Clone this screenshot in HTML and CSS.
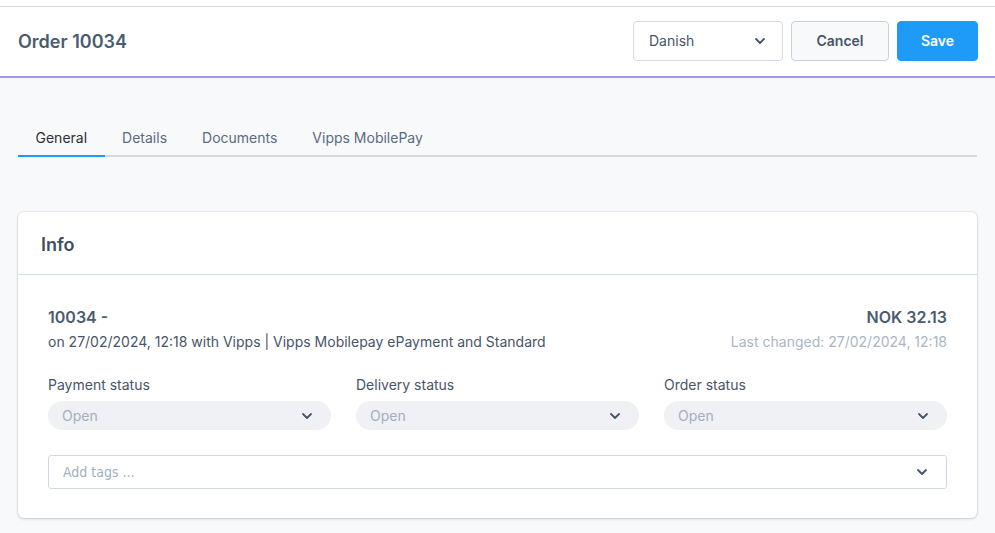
FILE: index.html
```html
<!DOCTYPE html>
<html>
<head>
<meta charset="utf-8">
<link rel="stylesheet" href="styles.css">
</head>
<body>
<div class="topstrip"></div>
<header class="header">
  <h1 class="title">Order 10034</h1>
  <div class="actions">
    <div class="lang">
      <span>Danish</span>
      <svg class="chev" width="12" height="8" viewBox="0 0 12 8"><path d="M2 2l4 4 4-4" fill="none" stroke="#475569" stroke-width="1.8" stroke-linecap="round" stroke-linejoin="round"/></svg>
    </div>
    <button class="btn cancel">Cancel</button>
    <button class="btn save">Save</button>
  </div>
</header>
<main class="main">
  <nav class="tabs">
    <span class="tab active">General</span>
    <span class="tab">Details</span>
    <span class="tab">Documents</span>
    <span class="tab">Vipps MobilePay</span>
  </nav>
  <section class="card">
    <div class="card-head">Info</div>
    <div class="card-body">
      <div class="summary">
        <div>
          <div class="ordno">10034 -</div>
          <div class="sub">on 27/02/2024, 12:18 with Vipps | Vipps Mobilepay ePayment and Standard</div>
        </div>
        <div class="right">
          <div class="amount">NOK 32.13</div>
          <div class="changed">Last changed: 27/02/2024, 12:18</div>
        </div>
      </div>
      <div class="statuses">
        <div class="field">
          <label>Payment status</label>
          <div class="pill"><span>Open</span><svg width="12" height="8" viewBox="0 0 12 8"><path d="M2 2l4 4 4-4" fill="none" stroke="#475569" stroke-width="1.8" stroke-linecap="round" stroke-linejoin="round"/></svg></div>
        </div>
        <div class="field">
          <label>Delivery status</label>
          <div class="pill"><span>Open</span><svg width="12" height="8" viewBox="0 0 12 8"><path d="M2 2l4 4 4-4" fill="none" stroke="#475569" stroke-width="1.8" stroke-linecap="round" stroke-linejoin="round"/></svg></div>
        </div>
        <div class="field">
          <label>Order status</label>
          <div class="pill"><span>Open</span><svg width="12" height="8" viewBox="0 0 12 8"><path d="M2 2l4 4 4-4" fill="none" stroke="#475569" stroke-width="1.8" stroke-linecap="round" stroke-linejoin="round"/></svg></div>
        </div>
      </div>
      <div class="tags">
        <span>Add tags ...</span>
        <svg width="12" height="8" viewBox="0 0 12 8"><path d="M2 2l4 4 4-4" fill="none" stroke="#475569" stroke-width="1.8" stroke-linecap="round" stroke-linejoin="round"/></svg>
      </div>
    </div>
  </section>
</main>
</body>
</html>
```

FILE: styles.css
```css
* { box-sizing: border-box; }
html, body { margin: 0; padding: 0; }
body {
  font-family: Inter, "Noto Sans", sans-serif;
  background: #f8f9fb;
  color: #475569;
  width: 995px;
  height: 533px;
  overflow: hidden;
}
.topstrip {
  height: 7px;
  background: #fff;
  border-bottom: 1px solid #d6dde5;
}
.header {
  height: 71px;
  background: #fff;
  border-bottom: 2px solid #a196ec;
  display: flex;
  align-items: center;
  justify-content: space-between;
  padding: 0 17px 0 18px;
}
.title {
  margin: 0;
  font-size: 18px;
  font-weight: 600;
  color: #4b5b6f;
}
.actions {
  display: flex;
  gap: 8px;
  margin-bottom: 2px;
}
.lang {
  width: 150px;
  height: 40px;
  border: 1px solid #d3dae2;
  border-radius: 4px;
  display: flex;
  align-items: center;
  justify-content: space-between;
  padding: 0 16px 0 15px;
  font-size: 14px;
  color: #475569;
  background: #fff;
}
.btn {
  height: 40px;
  border-radius: 4px;
  font-family: Inter, sans-serif;
  font-size: 14px;
  font-weight: 600;
}
.cancel {
  width: 98px;
  background: #f8f9fb;
  border: 1px solid #c9d1da;
  color: #475569;
}
.save {
  width: 81px;
  background: #1d9bf6;
  border: 1px solid #1d9bf6;
  color: #fff;
}
.main {
  padding: 0 18px;
}
.tabs {
  margin-top: 44px;
  display: flex;
  border-bottom: 2px solid #d3d9e0;
  height: 35px;
}
.tab {
  font-size: 14px;
  color: #5b6b80;
  padding: 7px 17.5px 0;
  height: 35px;
  margin-bottom: -2px;
}
.tab.active {
  color: #2b2f36;
  border-bottom: 2px solid #1d9bf6;
}
.card {
  margin-top: 55px;
  background: #fff;
  border-radius: 6px;
  box-shadow: 0 1px 3px rgba(30, 41, 59, 0.18), 0 0 0 1px rgba(226, 232, 240, 0.6);
  height: 306px;
}
.card-head {
  height: 63px;
  border-bottom: 1px solid #d3dde6;
  padding: 22px 23px 0;
  font-size: 18px;
  font-weight: 600;
  color: #3f4f63;
}
.card-body {
  padding: 31px 30px 0;
}
.summary {
  display: flex;
  justify-content: space-between;
}
.ordno {
  font-size: 16px;
  font-weight: 600;
  color: #4b5b6f;
  line-height: 22px;
}
.sub {
  font-size: 14px;
  color: #475569;
  margin-top: 5px;
}
.right { text-align: right; }
.amount {
  font-size: 16px;
  font-weight: 600;
  color: #4b5b6f;
  line-height: 22px;
}
.changed {
  font-size: 14px;
  color: #a9b6c4;
  margin-top: 5px;
}
.statuses {
  margin-top: 26px;
  display: grid;
  grid-template-columns: repeat(3, 1fr);
  gap: 25px;
}
.field label {
  display: block;
  font-size: 14px;
  color: #475569;
  line-height: 18px;
  margin-bottom: 7px;
}
.pill {
  height: 29px;
  border-radius: 15px;
  background: #eff1f5;
  display: flex;
  align-items: center;
  justify-content: space-between;
  padding: 0 18px 0 14px;
  font-size: 14px;
  color: #a2afbd;
}
.tags {
  margin-top: 25px;
  height: 34px;
  border: 1px solid #cfd8e2;
  border-radius: 3px;
  display: flex;
  align-items: center;
  justify-content: space-between;
  padding: 0 18px 0 14px;
  font-family: "DejaVu Sans", sans-serif;
  font-stretch: condensed;
  font-size: 14px;
  color: #a2afbd;
}
```
